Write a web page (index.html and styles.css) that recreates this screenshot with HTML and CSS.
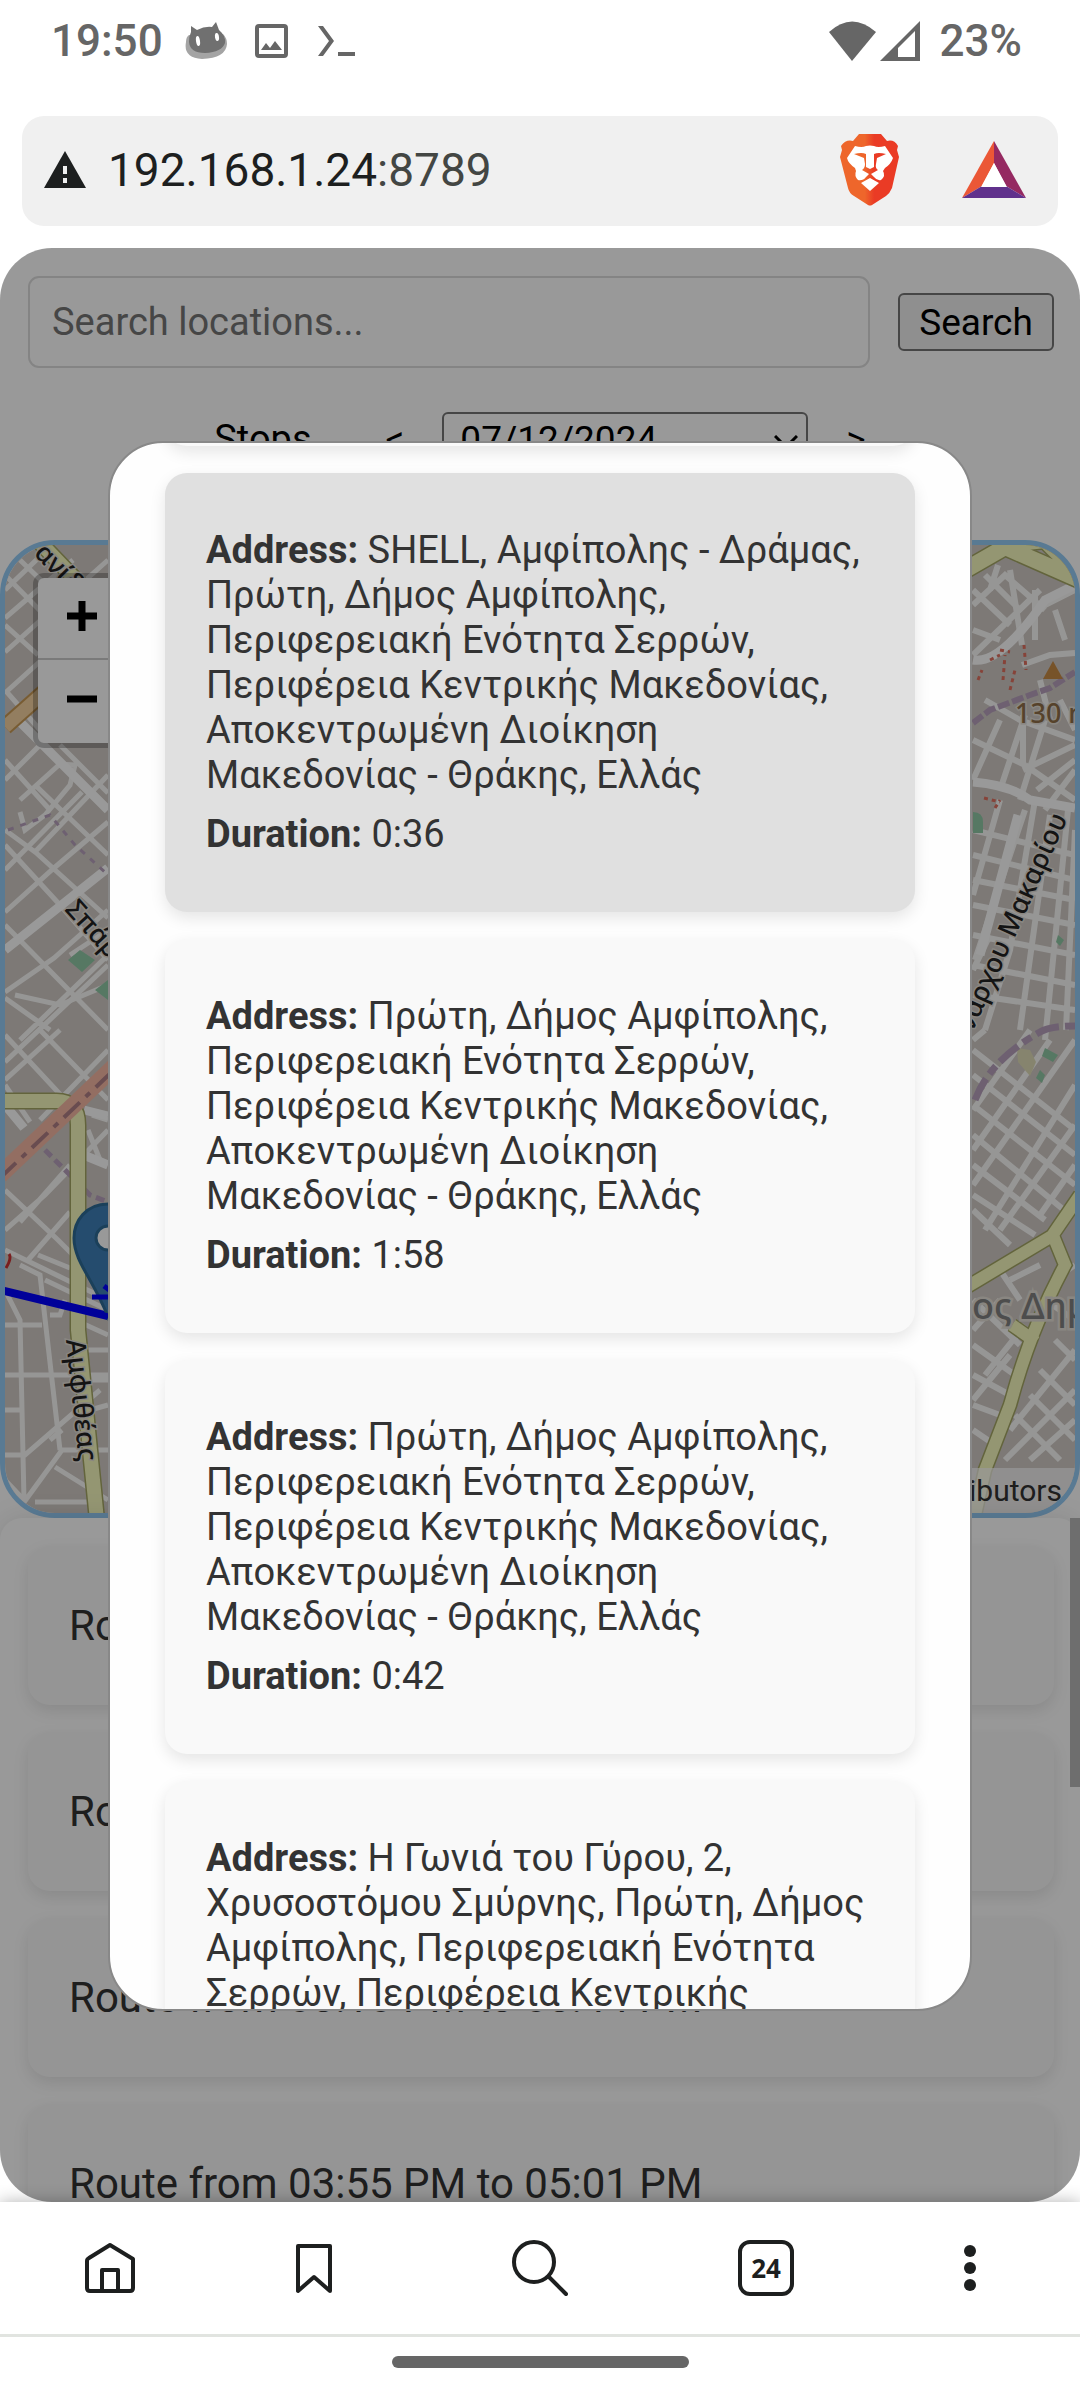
FILE: index.html
```html
<!DOCTYPE html>
<html lang="en">
<head>
<meta charset="utf-8">
<meta name="viewport" content="width=device-width">
<title>Stops</title>
<link rel="stylesheet" href="styles.css">
</head>
<body>
<header class="status">
  <span class="status-time">19:50</span>
  <svg class="status-cat" width="42" height="38" viewBox="0 0 42 38"><path d="M1 20Q-2 36 17 37Q41 36 42 22Q42 16 38 12L4 13Q1 15 1 20Z" fill="#a4a4a4"/><path d="M6 4L12 8Q20 4 27 5L31 0L34 8Q41 14 40 21Q37 30 20 31Q5 31 4 20Q4 14 6 10Z" fill="#707070"/><ellipse cx="13" cy="19" rx="2" ry="5" fill="#fff" transform="rotate(-8 13 19)"/><ellipse cx="32" cy="15" rx="2" ry="4" fill="#fff" transform="rotate(-8 32 15)"/></svg>
  <svg class="status-pic" width="33" height="34" viewBox="0 0 33 34" fill="#666"><rect x="2" y="2" width="29" height="30" rx="2" fill="none" stroke="#666" stroke-width="4"/><path d="M6 26L11 19L15 24L20 17L27 26Z"/></svg>
  <svg class="status-term" width="37" height="30" viewBox="0 0 37 30" fill="#666"><path d="M0 0H5L16 15L5 30H0L11 15ZM20 26H37V30H20Z"/></svg>
  <span class="spacer"></span>
  <svg width="47" height="40" viewBox="0 0 47 40"><path d="M0 11Q23 -10 47 11L23 40Z" fill="#666"/></svg>
  <svg class="status-signal" width="40" height="40" viewBox="0 0 40 40"><path d="M40 0V40H0ZM35 10L18 27V36H35Z" fill="#666" fill-rule="evenodd"/></svg>
  <span>23%</span>
</header>
<div class="address-bar">
  <svg width="42" height="38" viewBox="0 0 42 38"><path d="M21 0L42 37H0Z" fill="#1d1f1f"/><path d="M19 15H23V23H19ZM19 27H23V32H19Z" fill="#f0f0f0"/></svg>
  <span class="url">192.168.1.24<span class="port">:8789</span></span>
  <button class="plain" aria-label="Shields"><svg width="60" height="72" viewBox="0 0 60 72"><defs><linearGradient id="lion"><stop offset=".42" stop-color="#ee662b"/><stop offset=".58" stop-color="#ea3b25"/></linearGradient></defs><path d="M19 0H41L47 7Q54 5 58 12L57 16L59 23L52 54Q50 59 46 62L32 71Q30 72 28 71L14 62Q9 59 8 54L0 23L2 16L1 12Q6 5 13 7Z" fill="url(#lion)"/><path d="M15 12Q22 14 26 12Q30 11 34 12Q38 14 45 12L53 24Q51 30 45 34L43 37Q46 42 41 46Q37 47 34 43L31 40L38 36Q35 34 36 30L37 24L46 20Q38 18 34 20L34 33L30 35L26 33V20Q22 18 14 20L24 24L25 30Q25 34 22 36L29 40L26 43Q23 47 18 46Q14 42 16 37L15 34Q8 29 7 24ZM30 44L39 49L30 57L21 49Z" fill="#fff"/></svg></button>
  <button class="plain" aria-label="Rewards"><svg width="64" height="58" viewBox="0 0 64 58"><path d="M32 0L0 57L20 45L32 22Z" fill="#eb5736"/><path d="M32 0L64 57L44 45L32 22Z" fill="#952961"/><path d="M0 57H64L44 45H20Z" fill="#60318c"/><path d="M32 22L45 46H19Z" fill="#fff"/></svg></button>
</div>
<main class="viewport">
  <form class="search">
    <input class="search-box" type="text" placeholder="Search locations..." aria-label="Search locations">
    <button class="search-button" type="button">Search</button>
  </form>
  <div class="controls">
    <button class="plain stops" type="button">Stops</button>
    <button class="plain" type="button">&lt;</button>
    <div class="date">
      <select class="date-select" aria-label="Date"><option>07/12/2024</option></select>
      <svg class="date-chevron" width="24" height="14" viewBox="0 0 24 14"><path d="M1 1L12 12L23 1" fill="none" stroke="#000" stroke-width="3"/></svg>
    </div>
    <button class="plain" type="button">&gt;</button>
  </div>
  <section class="map" aria-label="Map">
    <svg class="map-tiles" viewBox="5 545 1070 968" preserveAspectRatio="xMidYMid slice">
      <rect x="5" y="545" width="1070" height="968" fill="#d0cac5"/>
      <!-- side streets, west -->
      <g fill="none" stroke="#fbfaf9" stroke-width="5">
        <path d="M5 590L52 545M5 618L33 594L73 560M5 652L108 560M5 693L108 600M5 575L108 680M20 560L108 645M5 625L38 655M5 690L40 730M5 780L55 730M5 760L50 810M20 800L60 764L75 765L70 785L45 815L25 830L20 812M5 830L35 852L108 775M5 870L82 792M5 845L60 905M35 785L108 855M60 745L108 793M60 905L108 960M5 912L54 868L108 822M33 850L108 918M5 925L108 1030M5 992L54 958L108 910M15 995L60 1005L108 985M20 1040L108 955M5 998L50 1030M108 930L70 955"/>
        <path d="M5 1062L108 965M5 1080L60 1030M40 1030L108 1100M5 1035L70 1105M40 1120L108 1050M5 1085L30 1122M5 1190L58 1240L108 1290M5 1230L45 1195L108 1130M20 1222L70 1165M5 1250L108 1300M38 1255L70 1268M28 1260L70 1212M20 1265L40 1275L60 1450M5 1290L20 1320L24 1500M5 1325H42M5 1375H108M5 1410H20M5 1455H25L100 1390M22 1505L62 1450H108M55 1467L108 1500M35 1502L90 1502M75 1320L108 1335M85 1350H108M88 1380H108M90 1410L108 1405M50 1315H60L65 1300M88 1130L100 1160M92 1115L108 1120"/>
        <path d="M5 1480L24 1500M45 1280L108 1310M50 1440L62 1430"/>
      </g>
      <g fill="none" stroke="#fff" stroke-width="9">
        <path d="M20 722L108 810M5 950L108 868M84 1110L108 1116M86 1156L108 1165M5 1105L24 1128"/>
      </g>
      <!-- side streets, east -->
      <g fill="none" stroke="#fbfaf9" stroke-width="6">
        <path d="M973 590L1010 625M985 575L1020 610M973 655L1040 590M973 630L1000 640M1010 570L1022 645M973 605L1005 575L1045 610M998 565L990 590M1035 590V640M1055 610L1065 640M1045 605L1075 590M1022 665L1050 655L1075 653"/>
        <path d="M985 700L1020 720L1075 740M973 740L1025 765M973 780L1000 720M1000 790L1025 715M1020 800L1045 720M1045 810L1075 770M1023 770L1075 745M1025 765L1075 800M1037 790L1075 760M1023 715V765M1060 700L1075 730M1040 680L1050 720"/>
        <path d="M973 830L1075 855M973 855L1075 880M973 880L1075 900M973 905L1075 925M973 935L1075 955M973 965L1075 985M973 995L1075 1010M1000 800L973 895M1025 810L975 960M1050 815L1020 1030M1068 810L1045 1040M1035 800L1010 950L985 1030M1075 830L1066 1030M973 970L990 935"/>
        <path d="M973 1050L1075 1130M973 1075L1075 1155M973 1105L1075 1185M973 1135L1070 1215M973 1165L1045 1220M973 1195L1035 1235M985 1030L973 1040M1075 1040L973 1185M1050 1040L973 1150M1075 1085L985 1230M1075 1125L1000 1230M1075 1165L1040 1215M1030 1030L973 1110M973 1210L1010 1245M973 1300L1020 1345M973 1345L1015 1375M973 1375L1010 1395M973 1405L1000 1415M973 1430L995 1445M973 1330L1000 1300M985 1375L1025 1325M973 1400L1010 1355M1010 1430L1075 1350M1005 1460L1075 1390M1030 1460L1075 1420M1030 1395L1075 1440M1015 1415L1060 1460M1040 1370L1075 1405M1055 1340L1075 1360M1045 1300L1075 1320M1000 1270L1020 1300"/>
        <path d="M1010 1280L1040 1265M1060 1275L1075 1265"/>
      </g>
      <g fill="none" stroke="#fff" stroke-width="9">
        <path d="M973 782Q1010 785 1030 800L1075 808M973 660Q1000 665 1045 600L1075 585M1018 815L980 955"/>
      </g>
      <!-- green plots -->
      <path d="M973 812Q983 812 983 822V833H973ZM68 960L80 950L95 960L82 972ZM95 990L108 980V1000ZM1045 1048L1058 1055L1053 1062L1042 1056ZM1040 1070L1045 1075L1042 1083L1036 1078ZM1058 935L1064 940L1060 946L1056 942Z" fill="#8fc9a6"/>
      <path d="M1017 1048L1030 1050L1036 1062L1030 1076L1018 1062Z" fill="#e0ddb8"/>
      <!-- metro and boundaries -->
      <g fill="none" stroke="#b7a1bd">
        <path d="M973 723L990 710L1030 695L1050 688L1075 672" stroke-width="6" stroke-dasharray="12 3"/>
        <path d="M975 1100Q990 1060 1040 1032Q1050 1026 1075 1026" stroke-width="7" stroke-dasharray="24 6 10 6"/>
        <path d="M45 1150L75 1180L90 1195L108 1202" stroke-width="5" stroke-dasharray="9 5"/>
        <path d="M8 830L50 815L75 845L108 875" stroke-width="3" stroke-dasharray="6 7"/>
      </g>
      <path d="M978 680L982 670M990 660L1000 655M1003 680L1005 655M1010 690L1015 670M1024 645L1026 670M1000 650L1010 652M984 798L1000 802M995 808L1000 800" fill="none" stroke="#e07060" stroke-width="3" stroke-dasharray="4 4"/>
      <!-- main roads -->
      <path d="M5 727L60 678" fill="none" stroke="#c99a55" stroke-width="17"/>
      <path d="M5 727L60 678" fill="none" stroke="#f5d3a0" stroke-width="13"/>
      <path d="M28 530L100 605M5 1101H55Q78 1100 78 1125V1330L97 1520" fill="none" stroke="#a5a765" stroke-width="17"/>
      <path d="M28 530L100 605M5 1101H55Q78 1100 78 1125V1330L97 1520" fill="none" stroke="#f7fabf" stroke-width="14"/>
      <path d="M965 570L1005 547L1080 580M1000 545L1045 540L1080 575" fill="none" stroke="#a5a765" stroke-width="19"/>
      <path d="M965 570L1005 547L1080 580M1000 545L1045 540L1080 575" fill="none" stroke="#f7fabf" stroke-width="16"/>
      <path d="M965 1288L1052 1236L1080 1195M1054 1238L1065 1265Q1030 1330 1010 1405L985 1470L975 1515M1012 1325L1036 1342" fill="none" stroke="#a5a765" stroke-width="15"/>
      <path d="M965 1288L1052 1236L1080 1195M1054 1238L1065 1265Q1030 1330 1010 1405L985 1470L975 1515M1012 1325L1036 1342" fill="none" stroke="#f7fabf" stroke-width="12"/>
      <path d="M0 1175L115 1066" fill="none" stroke="#f5b8a4" stroke-width="17"/>
      <path d="M0 1178L115 1069" fill="none" stroke="#b07f85" stroke-width="4" stroke-dasharray="22 8 6 8"/>
      <path d="M1053 661L1063 679H1043Z" fill="#c78a45"/>
      <g class="map-label">
        <text transform="translate(33 554) rotate(46)">ανίδη</text>
        <text transform="translate(64 910) rotate(48)">Σπάρτης</text>
        <text transform="translate(66 1340) rotate(84)">Αμφιθέας</text>
        <text transform="translate(1068 818) rotate(-66)" text-anchor="end">νάρχου Μακαρίου</text>
        <text x="1015" y="723" class="map-peak">130 m</text>
        <text x="972" y="1319" class="map-district">ος Δημ</text>
      </g>
      <path d="M0 1290L108 1316" stroke="#00f" stroke-width="8"/>
      <path d="M108 1204C86 1204 74 1221 74 1238C74 1262 94 1280 108 1317C122 1280 142 1262 142 1238C142 1221 130 1204 108 1204Z" fill="#3f7fb8" stroke="#2e6c97" stroke-width="3"/>
      <circle cx="108" cy="1238" r="12" fill="#fff" stroke="#2e6c97" stroke-width="3"/>
      <path d="M92 1297H120M104 1286L112 1292M85 1310L112 1317" stroke="#00f" stroke-width="5"/>
      <path d="M6 1268Q12 1258 9 1254" fill="none" stroke="#c33" stroke-width="3"/>
    </svg>
    <div class="zoom">
      <button class="zoom-button" aria-label="Zoom in"><svg width="30" height="30" viewBox="0 0 30 30"><path d="M0 15H30M15 0V30" stroke="#000" stroke-width="7"/></svg></button>
      <button class="zoom-button" aria-label="Zoom out"><svg width="30" height="30" viewBox="0 0 30 30"><path d="M0 15H30" stroke="#000" stroke-width="7"/></svg></button>
    </div>
    <div class="attribution">© OpenStreetMap contributors</div>
  </section>
  <section class="routes">
    <div class="route">Route from 07:12 AM to 08:20 AM</div>
    <div class="route">Route from 09:05 AM to 10:31 AM</div>
    <div class="route">Route from 03:10 PM to 03:44 PM</div>
    <div class="route">Route from 03:55 PM to 05:01 PM</div>
    <span class="scrollbar"></span>
  </section>
  <div class="overlay">
    <div class="modal" role="dialog" aria-label="Stops">
      <div class="stop stop-passed"></div>
      <article class="stop stop-active">
        <p><b>Address:</b> SHELL, Αμφίπολης - Δράμας, Πρώτη, Δήμος Αμφίπολης, Περιφερειακή Ενότητα Σερρών, Περιφέρεια Κεντρικής Μακεδονίας, Αποκεντρωμένη Διοίκηση Μακεδονίας - Θράκης, Ελλάς</p>
        <p><b>Duration:</b> 0:36</p>
      </article>
      <article class="stop">
        <p><b>Address:</b> Πρώτη, Δήμος Αμφίπολης, Περιφερειακή Ενότητα Σερρών, Περιφέρεια Κεντρικής Μακεδονίας, Αποκεντρωμένη Διοίκηση Μακεδονίας - Θράκης, Ελλάς</p>
        <p><b>Duration:</b> 1:58</p>
      </article>
      <article class="stop">
        <p><b>Address:</b> Πρώτη, Δήμος Αμφίπολης, Περιφερειακή Ενότητα Σερρών, Περιφέρεια Κεντρικής Μακεδονίας, Αποκεντρωμένη Διοίκηση Μακεδονίας - Θράκης, Ελλάς</p>
        <p><b>Duration:</b> 0:42</p>
      </article>
      <article class="stop">
        <p><b>Address:</b> Η Γωνιά του Γύρου, 2, Χρυσοστόμου Σμύρνης, Πρώτη, Δήμος Αμφίπολης, Περιφερειακή Ενότητα Σερρών, Περιφέρεια Κεντρικής</p>
      </article>
    </div>
  </div>
</main>
<nav class="toolbar">
  <button class="plain tool" aria-label="Home"><svg width="50" height="52" viewBox="0 0 50 52" fill="none" stroke="#1d1f1f" stroke-width="4" stroke-linejoin="round"><path d="M25 3L48 17Q48 17 48 19V46Q48 49 45 49H5Q2 49 2 46V19Q2 17 4 16ZM17 49V28H33V49"/></svg></button>
  <button class="plain tool" aria-label="Bookmark"><svg width="36" height="52" viewBox="0 0 36 52" fill="none" stroke="#1d1f1f" stroke-width="4" stroke-linejoin="round"><path d="M2 4H34V49L18 35L2 49Z"/></svg></button>
  <button class="plain tool tool-wide" aria-label="Search the web"><svg width="56" height="58" viewBox="0 0 56 58" fill="none" stroke="#1d1f1f" stroke-width="4" stroke-linecap="round"><circle cx="22" cy="23" r="20"/><path d="M37 38L54 55"/></svg></button>
  <button class="plain tool" aria-label="Tabs"><span class="tab-count">24</span></button>
  <button class="plain tool" aria-label="Menu"><svg width="12" height="46" viewBox="0 0 12 46" fill="#1d1f1f"><circle cx="6" cy="6" r="6"/><circle cx="6" cy="23" r="6"/><circle cx="6" cy="40" r="6"/></svg></button>
</nav>
<footer class="gesture"><span class="gesture-handle"></span></footer>
</body>
</html>
```
FILE: styles.css
```css
* { box-sizing: border-box; }

body {
  margin: 0;
  height: 100vh;
  display: flex;
  flex-direction: column;
  background: #fff;
  font-family: Roboto, "Noto Sans", sans-serif;
  font-size: 37px;
  overflow: hidden;
}

button, input, select { font: inherit; color: #000; }

.plain {
  border: 0;
  padding: 0;
  background: none;
  display: flex;
  align-items: center;
  justify-content: center;
}

.spacer { flex: 1; }

.status {
  display: flex;
  align-items: center;
  height: 116px;
  padding: 0 58px 34px 51px;
  font-size: 44px;
  font-weight: 500;
  color: #666;
}
.status-cat { margin-left: 22px; }
.status-pic { margin-left: 28px; }
.status-term { margin-left: 30px; }
.status-signal { margin: 0 20px 0 4px; }

.address-bar {
  display: flex;
  align-items: center;
  gap: 62px;
  height: 110px;
  margin: 0 22px 22px;
  padding: 0 32px 2px 22px;
  border-radius: 22px;
  background: #f0f0f0;
}
.url {
  flex: 1;
  margin-left: -40px;
  font-size: 46px;
  color: #1d1f1f;
}
.port { color: #434643; }

.viewport {
  position: relative;
  flex: 1;
  min-height: 0;
  display: flex;
  flex-direction: column;
  border-radius: 52px;
  background: #fff;
  overflow: hidden;
}

.search {
  display: flex;
  align-items: center;
  gap: 28px;
  padding: 28px 26px 0 28px;
}
.search-box {
  flex: 1;
  min-width: 0;
  height: 92px;
  padding: 0 22px;
  border: 2px solid #ddd;
  border-radius: 11px;
  background: none;
  font-size: 38px;
}
.search-box::placeholder { color: #757575; opacity: 1; }
.search-button {
  height: 58px;
  width: 156px;
  padding: 0;
  border: 2px solid #757575;
  border-radius: 6px;
  background: #efefef;
}

.controls {
  display: flex;
  justify-content: center;
  gap: 38px;
  height: 172px;
  padding: 44px 0 74px;
}
.stops { margin-right: 36px; font-size: 38px; }
.date { position: relative; }
.date-select {
  width: 366px;
  height: 54px;
  padding: 0 16px;
  border: 2px solid #757575;
  border-radius: 6px;
  background: none;
  appearance: none;
}
.date-chevron { position: absolute; right: 10px; top: 23px; }

.map {
  position: relative;
  flex: none;
  height: 978px;
  border: 5px solid #95ccf6;
  border-radius: 55px;
  overflow: hidden;
}
.map-tiles { display: block; width: 100%; height: 100%; }
.map-label {
  font-family: "Noto Sans", sans-serif;
  font-size: 27px;
  font-weight: 500;
  fill: #222;
  stroke: #e5e0d8;
  stroke-width: 3px;
  paint-order: stroke;
}
.map-peak { fill: #8f6f48; }
.map-district { fill: #808080; font-size: 36px; stroke-width: 5px; }
.zoom {
  position: absolute;
  left: 28px;
  top: 28px;
  width: 97px;
  border: 5px solid rgba(0, 0, 0, .25);
  border-radius: 11px;
  background: #fff;
  background-clip: padding-box;
}
.zoom-button {
  display: flex;
  align-items: center;
  justify-content: center;
  width: 100%;
  height: 83px;
  border: 0;
  padding: 0 0 6px;
  background: none;
}
.zoom-button:first-child { height: 82px; padding-bottom: 4px; border-bottom: 2px solid #ccc; }
.attribution {
  position: absolute;
  right: 0;
  bottom: 0;
  padding: 0 13px;
  background: rgba(255, 255, 255, .7);
  font-size: 30px;
  line-height: 45px;
  color: #333;
}

.routes {
  position: relative;
  flex: 1;
  min-height: 0;
  display: flex;
  flex-direction: column;
  gap: 27px;
  padding: 28px 26px 0 28px;
  border-radius: 22px 22px 0 0;
  background: #fff;
  box-shadow: 0 0 28px rgba(0, 0, 0, .1);
}
.route {
  flex: none;
  padding: 55px 41px;
  border-radius: 22px;
  background: #f9f9f9;
  box-shadow: 0 6px 16px rgba(0, 0, 0, .1);
  font-size: 42px;
  line-height: 49px;
  color: #333;
}
.scrollbar {
  position: absolute;
  right: 0;
  top: 0;
  width: 10px;
  height: 269px;
  background: #b7b7b7;
}

.overlay {
  position: absolute;
  inset: 0;
  padding: 193px 0 191px;
  background: rgba(0, 0, 0, .4);
}
.modal {
  width: 80%;
  height: 100%;
  margin: 0 auto;
  padding: 0 55px;
  display: flex;
  flex-direction: column;
  gap: 27px;
  border: 2px solid #888;
  border-radius: 55px;
  background: #fefefe;
  overflow: hidden;
}
.stop {
  flex: none;
  padding: 41px;
  border-radius: 22px;
  background: #f9f9f9;
  box-shadow: 0 6px 16px rgba(0, 0, 0, .1);
  font-size: 38px;
  line-height: 45px;
  color: #333;
}
.stop p { margin: 14px 0; }
.stop-active { background: #e0e0e0; }
.stop-passed { margin-top: -79px; }

.toolbar {
  position: relative;
  display: flex;
  align-items: center;
  justify-content: space-between;
  height: 135px;
  padding: 0 64px;
  border-bottom: 3px solid #e1e4e0;
  background: #fff;
  box-shadow: 0 0 16px rgba(0, 0, 0, .3);
}
.tool { width: 92px; height: 92px; }
.tool-wide { width: 136px; }
.tab-count {
  width: 56px;
  height: 56px;
  border: 4px solid #1d1f1f;
  border-radius: 12px;
  font-family: "Noto Sans", sans-serif;
  font-size: 26px;
  font-weight: 700;
  line-height: 48px;
  color: #1d1f1f;
}
.gesture {
  position: relative;
  display: flex;
  justify-content: center;
  height: 63px;
  padding-top: 19px;
  background: #fff;
}
.gesture-handle {
  width: 297px;
  height: 12px;
  border-radius: 6px;
  background: #666;
}
```
